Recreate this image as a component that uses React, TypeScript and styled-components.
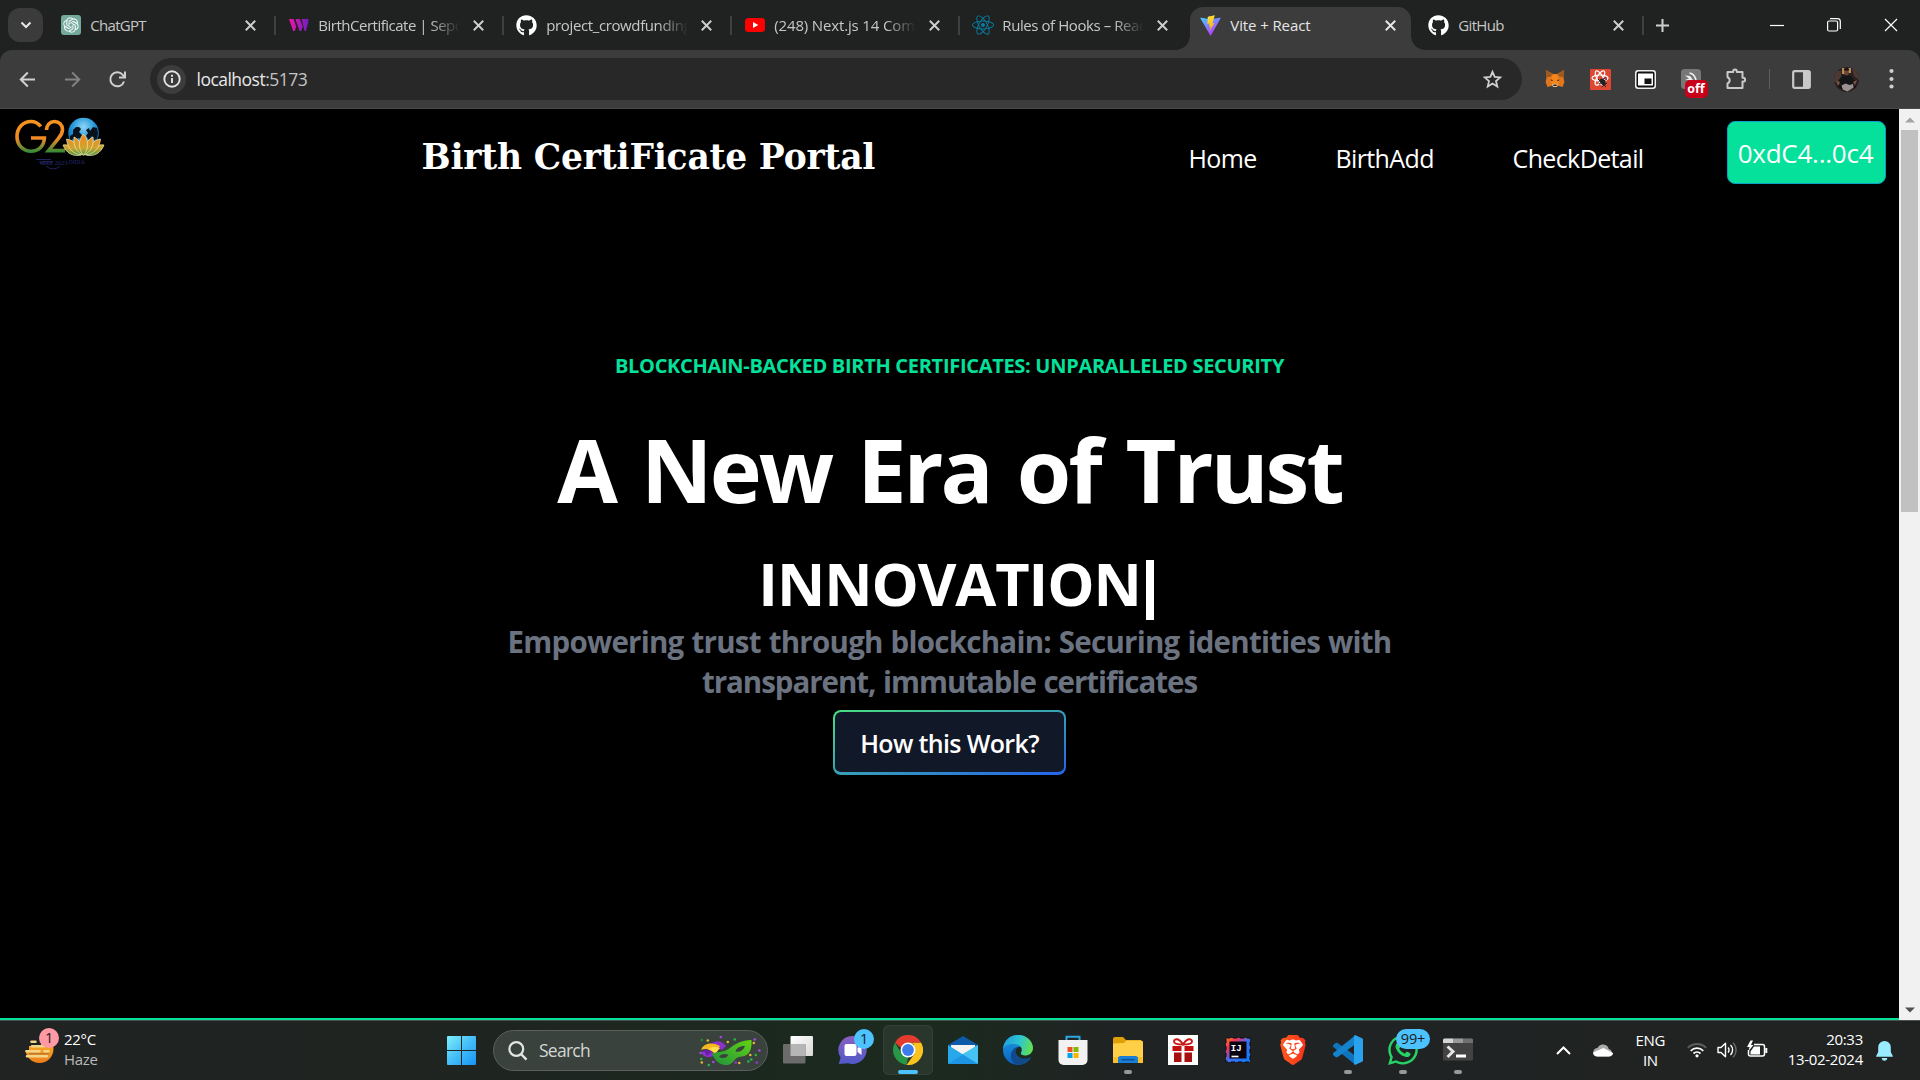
import React from "react";
import styled, { createGlobalStyle, css } from "styled-components";
import { FaGithub, FaReact, FaWhatsapp } from "react-icons/fa";
import { SiOpenai, SiBrave } from "react-icons/si";

const SANS = `"Open Sans", "Noto Sans", "Segoe UI", sans-serif`;

const Global = createGlobalStyle`
  * { box-sizing: border-box; }
  body { margin: 0; background: #000; overflow: hidden; font-family: ${SANS}; }
  svg { display: block; flex: none; }
`;

const Screen = styled.div`
  width: 1920px;
  height: 1080px;
  display: flex;
  flex-direction: column;
  background: #000;
  color: #fff;
`;

/* ---------- tab strip ---------- */

const TabStrip = styled.div`
  height: 50px;
  flex: none;
  display: flex;
  background: #202221;
  padding-left: 8px;
`;

const TabSearch = styled.div`
  width: 35px;
  height: 34px;
  margin: 8px 4.3px 0 0;
  border-radius: 12px;
  background: #3b3b3b;
  display: flex;
  align-items: center;
  justify-content: center;
`;

const TabBox = styled.div<{ $active?: boolean; $divider?: boolean }>`
  position: relative;
  width: 228px;
  height: 50px;
  flex: none;
  display: flex;
  align-items: center;
  padding-left: 13.5px;
  ${(p) =>
    p.$divider &&
    css`
      &::after {
        content: "";
        position: absolute;
        right: -1px;
        top: 16px;
        width: 2px;
        height: 19px;
        background: #3f4140;
      }
    `}
  ${(p) =>
    p.$active &&
    css`
      &::before {
        content: "";
        position: absolute;
        left: 3px;
        right: 4px;
        top: 7px;
        bottom: 0;
        border-radius: 13px 13px 0 0;
        background: #3c3c3c;
      }
    `}
`;

const TabFlare = styled.i<{ $side: "left" | "right" }>`
  position: absolute;
  bottom: 0;
  width: 14px;
  height: 14px;
  ${(p) => (p.$side === "left" ? "left: -11px;" : "right: -10px;")}
  background: radial-gradient(
    circle at ${(p) => (p.$side === "left" ? "0 0" : "100% 0")},
    transparent 13.5px,
    #3c3c3c 14px
  );
`;

const Favicon = styled.span`
  position: relative;
  width: 20px;
  height: 20px;
  flex: none;
  display: flex;
  align-items: center;
  justify-content: center;
`;

const TabTitle = styled.span<{ $ls: number; $active?: boolean; $fade?: boolean }>`
  position: relative;
  width: 142px;
  margin-left: 9.5px;
  overflow: hidden;
  white-space: nowrap;
  font-size: 15px;
  line-height: 22px;
  letter-spacing: ${(p) => p.$ls}px;
  color: ${(p) => (p.$active ? "#e6e6e6" : "#c6c7c6")};
  ${(p) => p.$fade && "mask-image: linear-gradient(90deg, #000 112px, transparent 142px);"}
`;

const TabClose = styled.span`
  position: relative;
  margin-left: 13px;
`;

const NewTab = styled.div`
  display: flex;
  align-items: center;
  margin-left: 13px;
  height: 50px;
`;

const WindowButtons = styled.div`
  margin-left: auto;
  height: 49px;
  display: flex;
  align-items: center;
  gap: 42.7px;
  padding-right: 22.5px;
`;

/* ---------- toolbar ---------- */

const ToolbarBack = styled.div`
  height: 59px;
  flex: none;
  background: #202221;
`;

const Toolbar = styled.div`
  height: 59px;
  background: #3c3c3c;
  border-bottom: 1px solid #494b4a;
  border-radius: 12px 12px 0 0;
  display: flex;
  align-items: center;
`;

const NavButtons = styled.div`
  width: 150px;
  display: flex;
  align-items: center;
  padding-left: 17px;
  gap: 24px;
`;

const AddressBar = styled.div`
  width: 1372px;
  height: 42px;
  border-radius: 21px;
  background: #282828;
  display: flex;
  align-items: center;
  padding: 0 19px 0 7px;
`;

const SiteInfo = styled.div`
  width: 29px;
  height: 29px;
  border-radius: 50%;
  background: #3c3c3c;
  display: flex;
  align-items: center;
  justify-content: center;
`;

const Url = styled.div`
  margin-left: 10.5px;
  flex: 1;
  font-size: 17.5px;
  line-height: 26px;
  letter-spacing: -0.52px;
  color: #e8e8e8;
  span { color: #c4c4c4; }
`;

const Extensions = styled.div`
  display: flex;
  align-items: center;
  margin-left: 23px;
  gap: 24.5px;
`;

const OffIcon = styled.div`
  position: relative;
  width: 20px;
  height: 20px;
`;

const OffBadge = styled.span`
  position: absolute;
  left: 4px;
  top: 11px;
  width: 23px;
  height: 18px;
  border-radius: 5px;
  background: #c8001a;
  font-size: 12.5px;
  font-weight: 700;
  line-height: 17px;
  text-align: center;
  color: #fff;
`;

const ToolbarDivider = styled.div`
  width: 1.5px;
  height: 20px;
  background: #606060;
  margin: 0 22px 0 21.5px;
`;

const ToolbarEnd = styled.div`
  display: flex;
  align-items: center;
`;

const Avatar = styled.div`
  width: 25px;
  height: 25px;
  border-radius: 50%;
  overflow: hidden;
  margin: 0 30px 0 23px;
`;

/* ---------- page ---------- */

const Viewport = styled.div`
  height: 911px;
  flex: none;
  display: flex;
`;

const Page = styled.main`
  width: 1899px;
  background: #000;
  border-bottom: 2px solid #05e09b;
  display: flex;
  flex-direction: column;
`;

const Header = styled.header`
  height: 80px;
  display: flex;
  align-items: flex-start;
`;

const Logo = styled.div`
  width: 95px;
  margin: 5px 0 0 12px;
`;

const SiteTitle = styled.h1`
  margin: 28px 0 0 314.5px;
  width: 767px;
  font-family: "DejaVu Serif", serif;
  font-weight: 700;
  font-size: 34.5px;
  line-height: 40px;
  letter-spacing: -0.2px;
  white-space: nowrap;
`;

const NavLink = styled.a<{ $w: number }>`
  width: ${(p) => p.$w}px;
  margin-top: 31px;
  font-size: 25px;
  line-height: 36px;
  letter-spacing: -0.62px;
  color: #fff;
`;

const Wallet = styled.button`
  margin: 12px 0 0;
  padding: 1px 1px 0 0;
  width: 159px;
  height: 63px;
  border: 1px solid #0a9fc4;
  border-radius: 8px;
  background: #05e09b;
  color: #fff;
  font: 400 26px ${SANS};
  letter-spacing: -0.24px;
`;

const Hero = styled.section`
  display: flex;
  flex-direction: column;
  align-items: center;
  padding-top: 163px;
  white-space: nowrap;
  font-weight: 700;
`;

const Eyebrow = styled.div`
  font-size: 20px;
  line-height: 28px;
  letter-spacing: -0.3px;
  color: #05e09b;
`;

const Headline = styled.h2`
  margin: 39px 0 0;
  font-size: 88px;
  line-height: 100px;
  letter-spacing: -2.9px;
  word-spacing: 6px;
`;

const Typed = styled.div`
  display: flex;
  align-items: center;
  margin-top: 34px;
  padding-left: 13px;
  font-size: 59.5px;
  line-height: 60px;
  letter-spacing: -1.1px;
`;

const Caret = styled.span`
  width: 8px;
  height: 60px;
  margin: 0 0 0 5px;
  background: #fff;
  position: relative;
  top: 7px;
`;

const Lead = styled.p`
  margin: 9px 0 0;
  font-size: 29.5px;
  line-height: 40px;
  letter-spacing: -0.75px;
  word-spacing: 1px;
  text-align: center;
  color: #6b7280;
  span { letter-spacing: -1.04px; }
`;

const HowButton = styled.button`
  margin: 8px 0 0;
  width: 233px;
  height: 65px;
  padding: 1px 0 0;
  border: 2px solid transparent;
  border-bottom-width: 3px;
  border-radius: 8px;
  background: linear-gradient(#111827, #111827) padding-box,
    linear-gradient(to bottom right, #4ade80, #2563eb) border-box;
  color: #fff;
  font: 600 25px ${SANS};
  letter-spacing: -0.64px;
`;

const Scrollbar = styled.div`
  width: 21px;
  background: #f1f1f1;
  display: flex;
  flex-direction: column;
  align-items: center;
`;

const ScrollArrow = styled.div<{ $down?: boolean }>`
  height: 21px;
  display: flex;
  align-items: center;
  margin-top: ${(p) => (p.$down ? "auto" : 0)};
`;

const ScrollThumb = styled.div`
  width: 17px;
  height: 382px;
  background: #c1c1c1;
`;

/* ---------- taskbar ---------- */

const Taskbar = styled.footer`
  height: 60px;
  flex: none;
  display: flex;
  border-top: 1px solid #4a504d;
  background: linear-gradient(90deg, #202322 0, #1f2421 420px, #1b291f 800px, #1b291f 960px, #202324 1120px, #212322 100%);
`;

const Weather = styled.div`
  width: 447px;
  display: flex;
  padding: 5px 0 0 24px;
`;

const WeatherIcon = styled.div`
  position: relative;
  width: 40px;
  height: 40px;
`;

const CountBadge = styled.span<{ $x: number; $y: number; $w: number; $bg: string }>`
  position: absolute;
  left: ${(p) => p.$x}px;
  top: ${(p) => p.$y}px;
  width: ${(p) => p.$w}px;
  height: 20px;
  border-radius: 10px;
  background: ${(p) => p.$bg};
  color: #1c1c1c;
  font-size: 14.5px;
  line-height: 20px;
  letter-spacing: -0.2px;
  text-align: center;
`;

const Stack = styled.div<{ $align?: string }>`
  padding-top: 3px;
  font-size: 15px;
  line-height: 20px;
  letter-spacing: -0.3px;
  text-align: ${(p) => p.$align || "left"};
  color: #fff;
`;

const Muted = styled.div`
  color: #b9bab9;
  letter-spacing: -0.3px;
`;

const StartButton = styled.div`
  width: 46px;
  padding-top: 15px;
`;

const SearchPill = styled.div`
  width: 275px;
  height: 41px;
  margin: 9px 0 0;
  border: 1px solid #5a605d;
  border-radius: 21px;
  background: #39423c;
  display: flex;
  align-items: center;
  padding-left: 13.5px;
`;

const SearchLabel = styled.span`
  width: 160px;
  margin-left: 11.5px;
  padding-bottom: 1px;
  font-size: 17.5px;
  line-height: 24px;
  letter-spacing: -0.74px;
  color: #d3d6d4;
`;

const Apps = styled.div`
  display: flex;
  gap: 5px;
  margin-left: 5px;
  width: 790px;
`;

const AppTile = styled.div<{ $active?: boolean; $running?: boolean }>`
  position: relative;
  width: 50px;
  height: 50px;
  margin-top: 4px;
  flex: none;
  display: flex;
  align-items: center;
  justify-content: center;
  border-radius: 6px;
  ${(p) => p.$active && "background: #28362c; box-shadow: inset 0 0 0 1px #324037;"}
  &::after {
    content: "";
    display: ${(p) => (p.$active || p.$running ? "block" : "none")};
    position: absolute;
    bottom: 1px;
    left: ${(p) => (p.$active ? 15 : 21)}px;
    width: ${(p) => (p.$active ? 20 : 8)}px;
    height: 4px;
    border-radius: 2px;
    background: ${(p) => (p.$active ? "#4cc2ff" : "#969998")};
  }
`;

const Tray = styled.div`
  display: flex;
  align-items: flex-start;
`;

const TrayItem = styled.div<{ $ml: number; $mt: number }>`
  margin: ${(p) => p.$mt}px 0 0 ${(p) => p.$ml}px;
`;

/* ---------- small icons ---------- */

const Cross = ({ size = 10, color = "#cdcecd", w = 1.9 }: { size?: number; color?: string; w?: number }) => (
  <svg width={size} height={size} viewBox="0 0 10 10" stroke={color} strokeWidth={(w * 10) / size} fill="none">
    <path d="M.7.7l8.6 8.6M9.3.7L.7 9.3" />
  </svg>
);

const OpenAiMark = () => (
  <svg width="20" height="20" viewBox="0 0 20 20">
    <rect width="20" height="20" rx="3" fill="#74aa9c" />
    <SiOpenai x={2.2} y={2.2} size={15.6} color="#fff" />
  </svg>
);

const ThirdwebMark = () => (
  <svg width="20" height="20" viewBox="0 0 20 20">
    <defs>
      <linearGradient id="tw" x1="0" x2="20" y1="0" y2="0" gradientUnits="userSpaceOnUse">
        <stop offset="0" stopColor="#f213a4" />
        <stop offset="1" stopColor="#6a1fc4" />
      </linearGradient>
    </defs>
    <path fill="url(#tw)" d="M0 4h4.600l2.700 7.500L5.800 16H4.200zM6.400 4h4.600l2.700 7.500L12.200 16h-1.600zM12.800 4h6.600l-.2 4-2.400 8h-1.300z" />
  </svg>
);

const YoutubeMark = () => (
  <svg width="20" height="20" viewBox="0 0 20 20">
    <rect y="3" width="20" height="14" rx="3.500" fill="#f00" />
    <path d="M8 7l5.300 3L8 13z" fill="#fff" />
  </svg>
);

const ViteMark = () => (
  <svg width="21" height="21" viewBox="0 0 32 32">
    <defs>
      <linearGradient id="va" x1="0" y1="0" x2=".6" y2="1">
        <stop offset="0" stopColor="#41d1ff" />
        <stop offset="1" stopColor="#bd34fe" />
      </linearGradient>
      <linearGradient id="vb" x1=".4" y1="0" x2=".6" y2="1">
        <stop offset="0" stopColor="#ffea83" />
        <stop offset=".1" stopColor="#ffdd35" />
        <stop offset="1" stopColor="#ffa800" />
      </linearGradient>
    </defs>
    <path fill="url(#va)" d="M31.200 5.200L16.800 31a.8.8 0 0 1-1.400 0L.8 5.200a.8.8 0 0 1 .8-1.200L16 6.600l14.400-2.600a.8.8 0 0 1 .8 1.200z" />
    <path fill="url(#vb)" d="M22.600.5L11.900 2.600l-.7 11.200 3.300-.7-.9 4.500 2.300-.6-1.300 7.500 7.500-12.300-3.300.7z" />
  </svg>
);

const Arrow = ({ flip, color }: { flip?: boolean; color: string }) => (
  <svg width="21" height="21" viewBox="0 0 21 21" fill="none" stroke={color} strokeWidth="2" transform={flip ? "scale(-1 1)" : undefined}>
    <path d="M18 10.500H4M10.800 3.500l-7 7 7 7" />
  </svg>
);

const Reload = () => (
  <svg width="21" height="21" viewBox="0 0 21 21" fill="none" stroke="#d0d0d0" strokeWidth="2">
    <path d="M17 12.500A7 7 0 1 1 15.600 5.700L17.500 7.600" />
    <path d="M18 2.500v6h-6" />
  </svg>
);

const InfoIcon = () => (
  <svg width="18" height="18" viewBox="0 0 18 18" fill="none" stroke="#e4e4e4" strokeWidth="1.900">
    <circle cx="9" cy="9" r="7.700" />
    <path d="M9 8v5M9 4.800v1.900" />
  </svg>
);

const Star = () => (
  <svg width="21" height="21" viewBox="0 0 21 21" fill="none" stroke="#d0d0d0" strokeWidth="1.800" strokeLinejoin="miter">
    <path d="M10.500 2.800l2.200 5.100 5.500.5-4.200 3.700 1.300 5.400-4.800-2.900-4.800 2.900L7 12.100 2.800 8.400l5.500-.5z" />
  </svg>
);

const Fox = () => (
  <svg width="20" height="20" viewBox="0 0 20 20">
    <path fill="#e2761b" d="M.8 1L8 5h4l7.200-4-.8 7 1 5-1.800 5-4.600-1.200L11.500 18h-3L7 16.800 2.400 18 .6 13l1-5z" />
    <path fill="#9c5a1f" d="M.8 1l7 4.500L5 8H1.600zM19.200 1l-7 4.500L15 8h3.400z" />
    <path fill="#f6851b" d="M7.600 5.500h4.800l2 6.500-1.400 3H7l-1.400-3z" />
    <path fill="#e4c9a8" d="M7 15.500l1.500-.8h3l1.500.8-1.300 2.500H8.300z" />
    <path fill="#222" d="M5.800 10.300l2.500 1.200-2 .4zM14.200 10.300l-2.500 1.200 2 .4zM8.500 15.500h3l.3 1.500H8.200z" />
  </svg>
);

const ReactDebug = () => (
  <svg width="21" height="21" viewBox="0 0 21 21">
    <rect width="21" height="21" rx="1" fill="#df4733" />
    <g fill="none" stroke="#fff" strokeWidth="1.200">
      <ellipse cx="10" cy="9" rx="8" ry="3" />
      <ellipse cx="10" cy="9" rx="8" ry="3" transform="rotate(60 10 9)" />
      <ellipse cx="10" cy="9" rx="8" ry="3" transform="rotate(120 10 9)" />
    </g>
    <ellipse cx="12.800" cy="13" rx="2.500" ry="3.800" transform="rotate(-35 12.800 13)" fill="#262020" />
    <path d="M8 10l8 8M9 15l8-5M8.500 12.500l7-4M11.500 18l5.500-4" stroke="#262020" />
  </svg>
);

const PipIcon = () => (
  <svg width="21" height="19" viewBox="0 0 21 19">
    <rect width="21" height="19" rx="3" fill="#eee" />
    <rect x="1.500" y="1.500" width="18" height="16" rx="2" fill="#111" />
    <rect x="3" y="3.500" width="15" height="12" fill="#fff" />
    <rect x="9.500" y="8.500" width="7" height="5.500" fill="#111" />
  </svg>
);

const GreyExtension = () => (
  <svg width="20" height="20" viewBox="0 0 20 20">
    <rect width="20" height="20" rx="3.500" fill="#777" />
    <path d="M8.500 4c3 .5 5.500 3 6.500 7" stroke="#eee" strokeWidth="1.600" fill="none" />
    <path d="M4 6.500l5 .5 3 4H4l4-1.500z" fill="#eee" />
  </svg>
);

const Puzzle = () => (
  <svg width="22" height="22" viewBox="0 0 22 22" fill="none" stroke="#c9c9c9" strokeWidth="2">
    <path d="M2.500 4h5.700V3.200a1.800 1.800 0 0 1 3.600 0V4h5.700v5.800h.7a1.900 1.900 0 0 1 0 3.800h-.7V20h-15v-4.600a3.300 3.300 0 0 0 0-6.200z" strokeLinejoin="round" />
  </svg>
);

const SidePanel = () => (
  <svg width="19" height="19" viewBox="0 0 19 19">
    <rect x="1.200" y="1.200" width="16.600" height="16.600" rx="1.500" fill="none" stroke="#c9c9c9" strokeWidth="2.200" />
    <path d="M11 1h7v17h-7z" fill="#c9c9c9" />
  </svg>
);

const AvatarArt = () => (
  <svg width="25" height="25" viewBox="0 0 25 25">
    <rect width="25" height="25" fill="#2a2120" />
    <path d="M0 4h7v6L3 15H0zM18 2h7v11l-5-4z" fill="#4d3933" />
    <path d="M8 1h3v6H8zM14 1h3v5h-3z" fill="#b98a55" />
    <ellipse cx="12.500" cy="5.500" rx="2.300" ry="3" fill="#6a4632" />
    <path d="M10 3.500h5V1.500h-5z" fill="#15100f" />
    <path d="M5 13l4-4.500h7l5 5.500-4 4H7z" fill="#141517" />
    <path d="M7.500 18.500l4-2 4 1.500 3.500-1 .5 3.500-6 4-5-2z" fill="#9b9193" />
    <path d="M2 14l4 1-2 4zM23 13l-4 2 2 3z" fill="#7a554a" />
    <path d="M3 19l4-1 2 5zM20 19l3-1-3 4z" fill="#141214" />
  </svg>
);

const Dots = () => (
  <svg width="5" height="22" viewBox="0 0 5 22" fill="#cfcfcf">
    <circle cx="2.500" cy="3" r="2.100" />
    <circle cx="2.500" cy="11" r="2.100" />
    <circle cx="2.500" cy="18.500" r="2.100" />
  </svg>
);

const G20Logo = () => (
  <svg width="95" height="56" viewBox="12 114 95 56">
    <defs>
      <linearGradient id="gt" x1="0" y1="120" x2="0" y2="154" gradientUnits="userSpaceOnUse">
        <stop offset="0" stopColor="#f7931e" />
        <stop offset=".55" stopColor="#f08a24" />
        <stop offset="1" stopColor="#188a3c" />
      </linearGradient>
      <radialGradient id="gb" cx=".5" cy=".3" r=".65">
        <stop offset="0" stopColor="#8fd6f7" />
        <stop offset=".6" stopColor="#1d93d6" />
        <stop offset="1" stopColor="#0a63a8" />
      </radialGradient>
      <linearGradient id="gp" x1="0" y1="136" x2="0" y2="156" gradientUnits="userSpaceOnUse">
        <stop offset="0" stopColor="#f08a1e" />
        <stop offset=".6" stopColor="#cda62f" />
        <stop offset="1" stopColor="#43963c" />
      </linearGradient>
    </defs>
    <g fill="none" stroke="url(#gt)" strokeWidth="3.600">
      <path d="M40.800 126.500C37.500 122.300 34 121.500 31 121.500c-8 0-14 6.500-14 15s6 14.800 14 14.800c7.500 0 13-5 13.400-13.300H31" />
      <path d="M46.500 130c0-5 3.500-8.500 8-8.500s8 3.500 8 8c0 3.500-1.500 6-4 8.800L48.500 150.600H65" />
    </g>
    <circle cx="83.500" cy="133" r="15.300" fill="url(#gb)" />
    <path fill="#07121c" d="M73 130l3-3 3 0 2 2-2 3 3 3 0 4-4-1-2 3-3-2-3 2 0-5 3-2zM86 130l3-2 1 3 3-4 4 1 1 5-1 6-3 1-2-4-3 4-3-4 2-3z" />
    <g fill="url(#gp)" stroke="#f4e8b8" strokeWidth=".7">
      <path d="M63 145c6-1 13 2 18 10-8 2-15-2-18-10zM104 145c-6-1-13 2-18 10 8 2 15-2 18-10z" />
      <path d="M66.500 139c7 1 12 6 15 16-9-1-14-7-15-16zM100.500 139c-7 1-12 6-15 16 9-1 14-7 15-16z" />
      <path d="M74 137c6 3 9 9 9 18-7-3-10-10-9-18zM93 137c-6 3-9 9-9 18 7-3 10-10 9-18z" />
      <path d="M83.500 134c5 5 6 14 0 21.500-6-7.500-5-16.500 0-21.500z" />
    </g>
    <g fill="#25286b">
      <text x="39" y="165" fontFamily="Noto Sans, FreeSans, sans-serif" fontWeight="700" fontSize="6.500">भारत</text>
      <text x="54.500" y="165" fontFamily="Liberation Serif, serif" fontSize="6.500">2023</text>
      <text x="68.500" y="164" fontFamily="Liberation Serif, serif" fontSize="5.800">INDIA</text>
    </g>
    <path d="M36 159.500h15M46 166c4 3.500 10 4 14 0" fill="none" stroke="#25286b" strokeWidth=".9" />
  </svg>
);

/* ---------- taskbar icons ---------- */

const HazeArt = () => (
  <svg width="32" height="40" viewBox="0 0 32 40">
    <defs>
      <linearGradient id="hz" x1="0" y1="0" x2="0" y2="1">
        <stop offset="0" stopColor="#fbc02d" />
        <stop offset="1" stopColor="#ef7d1a" />
      </linearGradient>
    </defs>
    <circle cx="15.500" cy="23" r="14" fill="url(#hz)" />
    <path fill="#202322" d="M0 8h17v12H0zM0 20h5v4H0z" />
    <g stroke="#f3d58a" strokeWidth="2.600" strokeLinecap="round">
      <path d="M7.500 15.800h4M8 20.300h12M2.500 25.300h13M20.500 25.300h4M3 30.300h20" />
    </g>
    <path d="M5 27.800h20" stroke="#b9772a" strokeWidth="1.300" />
  </svg>
);

const WindowsMark = () => (
  <svg width="29" height="29" viewBox="0 0 29 29">
    <defs>
      <linearGradient id="wn" x1="0" y1="0" x2="1" y2="1">
        <stop offset="0" stopColor="#7df0fd" />
        <stop offset=".5" stopColor="#45bdf8" />
        <stop offset="1" stopColor="#1593f5" />
      </linearGradient>
    </defs>
    <path fill="url(#wn)" d="M0 1a1 1 0 0 1 1-1h13v14H0zM15 0h13a1 1 0 0 1 1 1v13H15zM0 15h14v14H1a1 1 0 0 1-1-1zM15 15h14v13a1 1 0 0 1-1 1H15z" />
  </svg>
);

const Magnifier = () => (
  <svg width="20" height="20" viewBox="0 0 20 20" fill="none" stroke="#e2e5e3" strokeWidth="2.200">
    <circle cx="8.300" cy="8" r="6.900" />
    <path d="M13 13l5.500 5.700" strokeWidth="2.500" />
  </svg>
);

const confetti: [number, number, string][] = [
  [21, 2, "#a24be0"], [8, 5.5, "#e8b62e"], [35, 4.5, "#27b84a"], [28, 7, "#e8b62e"], [2, 5, "#1e8f3c"],
  [55, 4.5, "#a24be0"], [54, 8, "#e8b62e"], [59.5, 15.5, "#a24be0"], [56, 20, "#27b84a"], [50.5, 20, "#e8b62e"],
  [51.5, 24.5, "#27b84a"], [57, 27.5, "#8e3bd6"], [48.5, 26.5, "#27b84a"], [39.5, 28, "#e8b62e"], [36, 27.5, "#8e3bd6"],
  [13.5, 27, "#a24be0"], [9, 30, "#27b84a"], [2, 27.5, "#e8b62e"], [1.5, 24, "#27b84a"], [0.8, 18, "#a24be0"],
];

const MaskArt = () => (
  <svg width="62" height="32" viewBox="0 0 62 32">
    <defs>
      <linearGradient id="mk" x1="0" y1="1" x2="1" y2="0">
        <stop offset="0" stopColor="#1f8f3d" />
        <stop offset="1" stopColor="#62d413" />
      </linearGradient>
    </defs>
    <path fill="#8d31cc" d="M12 9c4-4 11-4 15 2l-4 4zM2 17c2 5 6 6 13 4l-3-6z" />
    <path fill="#6a1fa6" d="M4 14l10 2-6 5z" />
    <path fill="#f6b91d" d="M2 15c2-6 10-9 19-4l-5 8C11 14 7 13 2 15z" />
    <path fill="#ffe04a" d="M9 14c5-3 9-2 12-1l-5 6c-2-3-4-4-7-5z" />
    <path
      fill="url(#mk)"
      fillRule="evenodd"
      d="M13 18.500c7-2 13-1.500 18-5.500s12-8 21.500-8c.5 7-1 14-7 16-4 1.200-6.500 0-9.500 3.500s-5 6-10.500 5.500c-6.500-.8-10-5.500-12.500-11.500zM20 21.500c3 2.500 7.500 2 9.500-1.500-3.500-2-7.500-1.200-9.500 1.500zM36.500 16.500c4 1 8-1 9.500-5.500-4.500 0-8.500 1.700-9.500 5.500z"
    />
    {confetti.map(([x, y, c], i) => (
      <circle key={i} cx={x + 0.8} cy={y} r="1.300" fill={c} />
    ))}
  </svg>
);

const TaskView = () => (
  <svg width="30" height="30" viewBox="0 0 30 30">
    <defs>
      <linearGradient id="tv" x1="0" y1="0" x2="1" y2="1">
        <stop offset="0" stopColor="#fff" />
        <stop offset="1" stopColor="#d8d8d8" />
      </linearGradient>
    </defs>
    <rect x="7.500" y="1" width="22.500" height="20" rx="1" fill="url(#tv)" />
    <rect y="9" width="22.500" height="19.500" rx="1" fill="#6a6b6a" />
    <path d="M7.500 9h15v12h-15z" fill="#b5b5b5" />
  </svg>
);

const ChatArt = () => (
  <svg width="30" height="30" viewBox="0 0 30 30">
    <defs>
      <linearGradient id="ch" x1="0" y1="0" x2="0" y2="1">
        <stop offset="0" stopColor="#8b5fc0" />
        <stop offset="1" stopColor="#5059c9" />
      </linearGradient>
    </defs>
    <path fill="url(#ch)" d="M15 1a14 14 0 1 1-5 27.200L.8 29l1.800-6.500A14 14 0 0 1 15 1z" />
    <rect x="6.500" y="9" width="12" height="12" rx="2" fill="#fff" />
    <path d="M19.500 13l4-3v10l-4-3z" fill="#fff" />
  </svg>
);

const ChromeArt = () => (
  <svg width="30" height="30" viewBox="0 0 30 30">
    <path d="M2 7.500L8.500 18.800 15 22.500l-1.500 7.400A15 15 0 0 1 2 7.500z" fill="#279847" />
    <path d="M28 7.500A15 15 0 0 1 13.500 29.900L21.500 18.800 20.600 9 15 7.500z" fill="#fbc31d" />
    <path d="M2 7.500A15 15 0 0 1 28 7.500H15L9 14z" fill="#e33b2e" />
    <circle cx="15" cy="15" r="7.500" fill="#fff" />
    <circle cx="15" cy="15" r="5.900" fill="#3b7ded" />
  </svg>
);

const MailArt = () => (
  <svg width="30" height="30" viewBox="0 0 30 30">
    <path d="M0 10L15 1l15 9v5H0z" fill="#0d5ba8" />
    <path d="M3 10h24v9H3z" fill="#f3f3f3" />
    <path d="M0 10l15 9.500L30 10v18a1 1 0 0 1-1 1H1a1 1 0 0 1-1-1z" fill="#28a8ea" />
    <path d="M30 10v19L14 19.500z" fill="#45c3f3" />
    <path d="M0 29l15-9.500L30 29z" fill="#1b8fe0" opacity=".75" />
  </svg>
);

const EdgeArt = () => (
  <svg width="30" height="30" viewBox="0 0 30 30">
    <defs>
      <linearGradient id="e1" x1="0" y1=".3" x2="1" y2=".5">
        <stop offset="0" stopColor="#1f9de0" />
        <stop offset=".55" stopColor="#2fc6cf" />
        <stop offset="1" stopColor="#63e04e" />
      </linearGradient>
      <linearGradient id="e2" x1="0" y1="0" x2="0" y2="1">
        <stop offset="0" stopColor="#1b9de2" />
        <stop offset="1" stopColor="#0a5fc0" />
      </linearGradient>
    </defs>
    <circle cx="15" cy="15" r="15" fill="url(#e2)" />
    <path d="M28 22.500c-3 5-8 7.500-13 7.500C10 29 7 25 8 19c.8-4 4-7.500 8-7-2.500 2-3.500 4-3 6.500 1 5 8 7 15 4z" fill="#114a8b" />
    <path d="M30.500 12l0 9-2.500 1.500c-7.500 3-14.500 0-15.200-5-.3-3 1.500-6 5-6z" fill="#1c2a20" />
    <path d="M0 14C1 5 7 0 15 0c9 0 15 6.500 15 13 0 5-4 7.500-8 7.500-3.500 0-4.500-1.500-4-3 1.500-2 1-7-4-8C8 8 2 10 0 14z" fill="url(#e1)" />
  </svg>
);

const StoreArt = () => (
  <svg width="30" height="30" viewBox="0 0 30 30">
    <path d="M8.500 6V1.800h13V6" fill="none" stroke="#2ea7e0" strokeWidth="2" />
    <path d="M.5 5h29v20a5 5 0 0 1-5 5h-19a5 5 0 0 1-5-5z" fill="#f2f2f2" />
    <path d="M9.500 12h5v5h-5z" fill="#f04e23" />
    <path d="M15.500 12h5v5h-5z" fill="#7fba00" />
    <path d="M9.500 18h5v5h-5z" fill="#00a3ee" />
    <path d="M15.500 18h5v5h-5z" fill="#ffb400" />
  </svg>
);

const FolderArt = () => (
  <svg width="30" height="30" viewBox="0 0 30 30">
    <path d="M0 4a2 2 0 0 1 2-2h8l3 3h15v6H0z" fill="#e0a106" />
    <path d="M0 8.500l11-.5 2.500-2.500H28a2 2 0 0 1 2 2V28H0z" fill="#ffcf48" />
    <path d="M0 22h30v6H0z" fill="#fbbf2a" />
    <path d="M5 28v-4.500A2.500 2.500 0 0 1 7.500 21h15a2.500 2.500 0 0 1 2.500 2.500V28z" fill="#1a7fd4" />
    <path d="M8.500 24.700h13" stroke="#0b4f91" strokeWidth="1.400" />
  </svg>
);

const GiftArt = () => (
  <svg width="30" height="30" viewBox="0 0 30 30">
    <path d="M0 0h30v30H0z" fill="#fff" />
    <path
      d="M15 9.500C12 9.500 6 9.500 6 6.500S11 2.500 15 9.500C19 2.500 24 3.500 24 6.500S18 9.500 15 9.500z"
      fill="none"
      stroke="#c81818"
      strokeWidth="1.900"
    />
    <path fill="#c40d0d" d="M4.500 11h9v5h-9zM16.500 11h9v5h-9z" />
    <path fill="#a80f0f" d="M6 17.500h7.500V27H6zM16.500 17.500H24V27h-7.500z" />
  </svg>
);

const IntellijArt = () => (
  <svg width="26" height="26" viewBox="0 0 26 26">
    <defs>
      <linearGradient id="ij" x1="0" y1="0" x2="1" y2="1">
        <stop offset="0" stopColor="#f97a12" />
        <stop offset=".25" stopColor="#f0325f" />
        <stop offset=".5" stopColor="#3f6ff0" />
        <stop offset="1" stopColor="#087cfa" />
      </linearGradient>
    </defs>
    <path d="M1 1h24v24H1z" fill="url(#ij)" stroke="#0b0b12" strokeWidth="1" strokeDasharray="4 3" />
    <path d="M4.500 4.500h17v17h-17z" fill="#0a0410" />
    <path d="M6.500 19.500h7" stroke="#fff" strokeWidth="1.600" />
    <text x="5.800" y="13.500" fill="#fff" fontFamily="Liberation Mono, monospace" fontWeight="700" fontSize="9">IJ</text>
  </svg>
);

const BraveArt = () => (
  <svg width="30" height="30" viewBox="0 0 30 30">
    <defs>
      <linearGradient id="br" x1="0" x2="1">
        <stop offset="0" stopColor="#ff5a1f" />
        <stop offset="1" stopColor="#f8321a" />
      </linearGradient>
    </defs>
    <path d="M9 2h12l4 2.500L27 9l-1 4-3 11-8 6-8-6L4 13 3 9l2-4.500z" fill="#fff" transform="translate(1.500 2) scale(.9)" />
    <SiBrave size={30} style={{ fill: "url(#br)" }} />
  </svg>
);

const VsCodeArt = () => (
  <svg width="30" height="30" viewBox="0 0 30 30">
    <path d="M1.500 8.800L0 10.300v1.500L22 29.500V20.500L4 7.500z" fill="#0f73bd" />
    <path d="M1.500 21.200L0 19.700v-1.500L22 .5v9L4 22.500z" fill="#1583cc" />
    <path d="M22 0l7 3.200a1.500 1.500 0 0 1 1 1.500v20.600a1.500 1.500 0 0 1-1 1.500L22 30l-1-1V1z" fill="#2aa3ef" />
  </svg>
);

const TerminalArt = () => (
  <svg width="30" height="30" viewBox="0 0 30 30">
    <path d="M0 5a1.500 1.500 0 0 1 1.500-1.500h27A1.500 1.500 0 0 1 30 5v19a1.500 1.500 0 0 1-1.500 1.500h-27A1.500 1.500 0 0 1 0 24z" fill="#434343" />
    <path d="M0 8V5a1.500 1.500 0 0 1 1.500-1.500H10V8z" fill="#d6d6d6" />
    <path d="M10 3.500h10V8H10z" fill="#9a9a9a" />
    <path d="M20 3.500h8.500A1.500 1.500 0 0 1 30 5v3H20z" fill="#707070" />
    <path d="M4.500 11.500l5.500 5-5.500 5.500" fill="none" stroke="#e5e5e5" strokeWidth="3" />
    <path d="M13 21h10" stroke="#fff" strokeWidth="3" />
  </svg>
);

const WhatsappArt = styled(FaWhatsapp)`
  width: 34px;
  height: 34px;
  color: #25d366;
`;

/* ---------- tray icons ---------- */

const CloudArt = () => (
  <svg width="20" height="14" viewBox="0 0 20 14">
    <path d="M4.500 13.500a4.200 4.200 0 0 1 0-8.400 6 6 0 0 1 11.300 1 3.800 3.800 0 0 1 0 7.400z" fill="#aaa" />
    <path d="M4.500 13.500C2 13.500 0 12 0 9.500L10.500 5 20 10c0 2-1.800 3.500-4 3.500z" fill="#fff" />
  </svg>
);

const WifiArt = () => (
  <svg width="20" height="17" viewBox="0 0 20 17" fill="none" strokeWidth="1.800">
    <path d="M.8 6.800a13 13 0 0 1 18.400 0" stroke="#5c5e5d" />
    <path d="M3.700 9.800a8.900 8.900 0 0 1 12.600 0" stroke="#fff" />
    <path d="M6.500 12.500a5 5 0 0 1 7 0" stroke="#fff" />
    <circle cx="10" cy="14.800" r="1.600" fill="#fff" />
  </svg>
);

const SpeakerArt = () => (
  <svg width="21" height="18" viewBox="0 0 21 18" fill="none" stroke="#fff" strokeWidth="1.400">
    <path d="M1 6.500h3l4.500-4.200v13.400L4 11.500H1z" strokeLinejoin="round" />
    <path d="M11 6.500a3.500 3.500 0 0 1 0 5M13.500 4a7 7 0 0 1 0 10" />
    <path d="M16 1.800a10 10 0 0 1 0 14.400" stroke="#666" />
  </svg>
);

const BatteryArt = () => (
  <svg width="21" height="18" viewBox="0 0 21 18">
    <path d="M7 4.500h8.500a2 2 0 0 1 2 2v7.500a2 2 0 0 1-2 2h-12a2 2 0 0 1-2-2v-4" fill="none" stroke="#fff" strokeWidth="1.500" />
    <path d="M18.300 8h2v5h-2zM3.500 11.500L7 6.500h6v8H3.500z" fill="#fff" />
    <path d="M3.500.5L0 7h2.500L1.500 11 6.500 5H4L6 .5z" fill="#fff" />
  </svg>
);

const BellArt = () => (
  <svg width="17" height="20" viewBox="0 0 17 20" fill="#99ebff">
    <path d="M8.500 0a6.300 6.300 0 0 1 6.300 6.300V11l2 4v.8H.2V15l2-4V6.300A6.300 6.300 0 0 1 8.500 0zM5.800 17h5.400a2.700 2.700 0 0 1-5.400 0z" />
  </svg>
);

/* ---------- data ---------- */

interface TabInfo {
  title: string;
  icon: React.ReactNode;
  ls: number;
  fade?: boolean;
  active?: boolean;
  divider?: boolean;
}

const tabs: TabInfo[] = [
  { title: "ChatGPT", icon: <OpenAiMark />, ls: -0.71, divider: true },
  { title: "BirthCertificate | Sepo", icon: <ThirdwebMark />, ls: -0.49, fade: true, divider: true },
  { title: "project_crowdfunding", icon: <FaGithub size={21} />, ls: -0.38, fade: true, divider: true },
  { title: "(248) Next.js 14 Comp", icon: <YoutubeMark />, ls: -0.15, fade: true, divider: true },
  { title: "Rules of Hooks – Reac", icon: <FaReact size={22} color="#087ea4" />, ls: -0.42, fade: true },
  { title: "Vite + React", icon: <ViteMark />, ls: -0.1, active: true },
  { title: "GitHub", icon: <FaGithub size={21} />, ls: -0.66, divider: true },
];

const apps: { name: string; art: React.ReactNode; active?: boolean; running?: boolean }[] = [
  { name: "taskview", art: <TaskView /> },
  { name: "chat", art: <><ChatArt /><CountBadge $x={26} $y={4} $w={20} $bg="#4cc2ff">1</CountBadge></> },
  { name: "chrome", art: <ChromeArt />, active: true },
  { name: "mail", art: <MailArt /> },
  { name: "edge", art: <EdgeArt /> },
  { name: "store", art: <StoreArt /> },
  { name: "explorer", art: <FolderArt />, running: true },
  { name: "gift", art: <GiftArt /> },
  { name: "intellij", art: <IntellijArt /> },
  { name: "brave", art: <BraveArt /> },
  { name: "vscode", art: <VsCodeArt />, running: true },
  { name: "whatsapp", art: <><WhatsappArt /><CountBadge $x={18} $y={4} $w={34} $bg="#4cc2ff">99+</CountBadge></>, running: true },
  { name: "terminal", art: <TerminalArt />, running: true },
];

export default function App() {
  return (
    <Screen>
      <Global />
      <TabStrip>
        <TabSearch>
          <svg width="12" height="8" viewBox="0 0 12 8" fill="none" stroke="#e8e8e8" strokeWidth="2">
            <path d="M1.500 1.500L6 6l4.500-4.500" />
          </svg>
        </TabSearch>
        {tabs.map((t) => (
          <TabBox key={t.title} $active={t.active} $divider={t.divider}>
            {t.active && <><TabFlare $side="left" /><TabFlare $side="right" /></>}
            <Favicon>{t.icon}</Favicon>
            <TabTitle $ls={t.ls} $active={t.active} $fade={t.fade}>{t.title}</TabTitle>
            <TabClose><Cross size={11} color={t.active ? "#e8e8e8" : "#cdcecd"} /></TabClose>
          </TabBox>
        ))}
        <NewTab>
          <svg width="13" height="13" viewBox="0 0 13 13" stroke="#d0d0d0" strokeWidth="2">
            <path d="M6.500 0v13M0 6.500h13" />
          </svg>
        </NewTab>
        <WindowButtons>
          <svg width="14" height="14" viewBox="0 0 14 14" stroke="#fff" strokeWidth="1.200">
            <path d="M0 7.500h14" />
          </svg>
          <svg width="14" height="14" viewBox="0 0 14 14" fill="none" stroke="#fff" strokeWidth="1.200">
            <rect x=".6" y="3" width="10" height="10" rx="1.500" />
            <path d="M3 .6h7.500a2.800 2.800 0 0 1 2.800 2.800V11" />
          </svg>
          <Cross size={14} color="#fff" w={1.2} />
        </WindowButtons>
      </TabStrip>

      <ToolbarBack>
        <Toolbar>
          <NavButtons>
            <Arrow color="#d0d0d0" />
            <Arrow flip color="#828282" />
            <Reload />
          </NavButtons>
          <AddressBar>
            <SiteInfo><InfoIcon /></SiteInfo>
            <Url>localhost<span>:5173</span></Url>
            <Star />
          </AddressBar>
          <Extensions>
            <Fox />
            <ReactDebug />
            <PipIcon />
            <OffIcon><GreyExtension /><OffBadge>off</OffBadge></OffIcon>
            <Puzzle />
          </Extensions>
          <ToolbarDivider />
          <ToolbarEnd>
            <SidePanel />
            <Avatar><AvatarArt /></Avatar>
            <Dots />
          </ToolbarEnd>
        </Toolbar>
      </ToolbarBack>

      <Viewport>
        <Page>
          <Header>
            <Logo><G20Logo /></Logo>
            <SiteTitle>Birth CertiFicate Portal</SiteTitle>
            <NavLink $w={147}>Home</NavLink>
            <NavLink $w={177}>BirthAdd</NavLink>
            <NavLink $w={214}>CheckDetail</NavLink>
            <Wallet>0xdC4...0c4</Wallet>
          </Header>
          <Hero>
            <Eyebrow>BLOCKCHAIN-BACKED BIRTH CERTIFICATES: UNPARALLELED SECURITY</Eyebrow>
            <Headline>A New Era of Trust</Headline>
            <Typed>INNOVATION<Caret /></Typed>
            <Lead>
              Empowering trust through blockchain: Securing identities with<br />
              <span>transparent, immutable certificates</span>
            </Lead>
            <HowButton>How this Work?</HowButton>
          </Hero>
        </Page>
        <Scrollbar>
          <ScrollArrow>
            <svg width="10" height="6" viewBox="0 0 10 6"><path d="M0 5.500L5 .5l5 5z" fill="#a3a3a3" /></svg>
          </ScrollArrow>
          <ScrollThumb />
          <ScrollArrow $down>
            <svg width="10" height="6" viewBox="0 0 10 6"><path d="M0 .5l5 5 5-5z" fill="#505050" /></svg>
          </ScrollArrow>
        </Scrollbar>
      </Viewport>

      <Taskbar>
        <Weather>
          <WeatherIcon>
            <HazeArt />
            <CountBadge $x={15} $y={2} $w={20} $bg="#ff99a4">1</CountBadge>
          </WeatherIcon>
          <Stack $align="left">
            22°C
            <Muted>Haze</Muted>
          </Stack>
        </Weather>
        <StartButton><WindowsMark /></StartButton>
        <SearchPill>
          <Magnifier />
          <SearchLabel>Search</SearchLabel>
          <MaskArt />
        </SearchPill>
        <Apps>
          {apps.map((a) => (
            <AppTile key={a.name} $active={a.active} $running={a.running}>{a.art}</AppTile>
          ))}
        </Apps>
        <Tray>
          <TrayItem $ml={-7.5} $mt={25}>
            <svg width="15" height="9" viewBox="0 0 15 9" fill="none" stroke="#fff" strokeWidth="2">
              <path d="M1 8l6.500-6.500L14 8" />
            </svg>
          </TrayItem>
          <TrayItem $ml={22} $mt={21.5}><CloudArt /></TrayItem>
          <TrayItem $ml={23} $mt={6}><Stack $align="center">ENG<br />IN</Stack></TrayItem>
          <TrayItem $ml={22} $mt={20}><WifiArt /></TrayItem>
          <TrayItem $ml={10} $mt={20}><SpeakerArt /></TrayItem>
          <TrayItem $ml={9} $mt={19}><BatteryArt /></TrayItem>
          <TrayItem $ml={19.5} $mt={5}><Stack $align="right">20:33<br />13-02-2024</Stack></TrayItem>
          <TrayItem $ml={13} $mt={20}><BellArt /></TrayItem>
        </Tray>
      </Taskbar>
    </Screen>
  );
}
